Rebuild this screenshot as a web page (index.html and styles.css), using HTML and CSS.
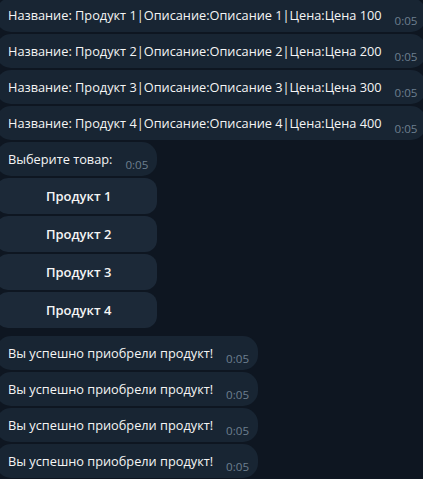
FILE: index.html
```html
<!DOCTYPE html>
<html lang="ru">
<head>
<meta charset="utf-8">
<link rel="stylesheet" href="styles.css">
</head>
<body>
<div class="chat">
  <div class="group">
    <div class="msg"><span class="text">Название: Продукт 1|Описание:Описание 1|Цена:Цена 100</span><span class="time">0:05</span></div>
    <div class="msg"><span class="text">Название: Продукт 2|Описание:Описание 2|Цена:Цена 200</span><span class="time">0:05</span></div>
    <div class="msg"><span class="text">Название: Продукт 3|Описание:Описание 3|Цена:Цена 300</span><span class="time">0:05</span></div>
    <div class="msg"><span class="text">Название: Продукт 4|Описание:Описание 4|Цена:Цена 400</span><span class="time">0:05</span></div>
    <div class="kb-group">
      <div class="msg"><span class="text">Выберите товар:</span><span class="time">0:05</span></div>
      <div class="btn">Продукт 1</div>
      <div class="btn">Продукт 2</div>
      <div class="btn">Продукт 3</div>
      <div class="btn">Продукт 4</div>
    </div>
  </div>
  <div class="group">
    <div class="msg"><span class="text">Вы успешно приобрели продукт!</span><span class="time">0:05</span></div>
    <div class="msg"><span class="text">Вы успешно приобрели продукт!</span><span class="time">0:05</span></div>
    <div class="msg"><span class="text">Вы успешно приобрели продукт!</span><span class="time">0:05</span></div>
    <div class="msg"><span class="text">Вы успешно приобрели продукт!</span><span class="time">0:05</span></div>
  </div>
</div>
</body>
</html>
```
FILE: styles.css
```css
html, body {
  margin: 0;
  padding: 0;
  background: #0e1621;
  height: 100%;
  overflow: hidden;
}
body {
  font-family: "Open Sans", "Noto Sans", sans-serif;
  color: #f5f5f5;
}
.chat {
  display: flex;
  flex-direction: column;
  align-items: flex-start;
  gap: 8px;
  margin-left: -4px;
  margin-top: -2px;
}
.group {
  display: flex;
  flex-direction: column;
  align-items: flex-start;
  gap: 2px;
}
.msg {
  display: flex;
  align-items: flex-end;
  gap: 13px;
  padding: 8px 9px 8px 12px;
  border-radius: 15px;
  background: #182533;
  font-size: 12.75px;
  line-height: 18px;
  white-space: nowrap;
}
.time {
  font-size: 11.6px;
  line-height: 14px;
  color: #6d7f8f;
  margin-bottom: -4px;
}
.kb-group {
  display: flex;
  flex-direction: column;
  align-items: stretch;
  gap: 2px;
}
.btn {
  height: 36px;
  display: flex;
  align-items: center;
  justify-content: center;
  border-radius: 12px;
  background: #1c2938;
  font-size: 13px;
  font-weight: 600;
  padding-left: 4px;
}
```
